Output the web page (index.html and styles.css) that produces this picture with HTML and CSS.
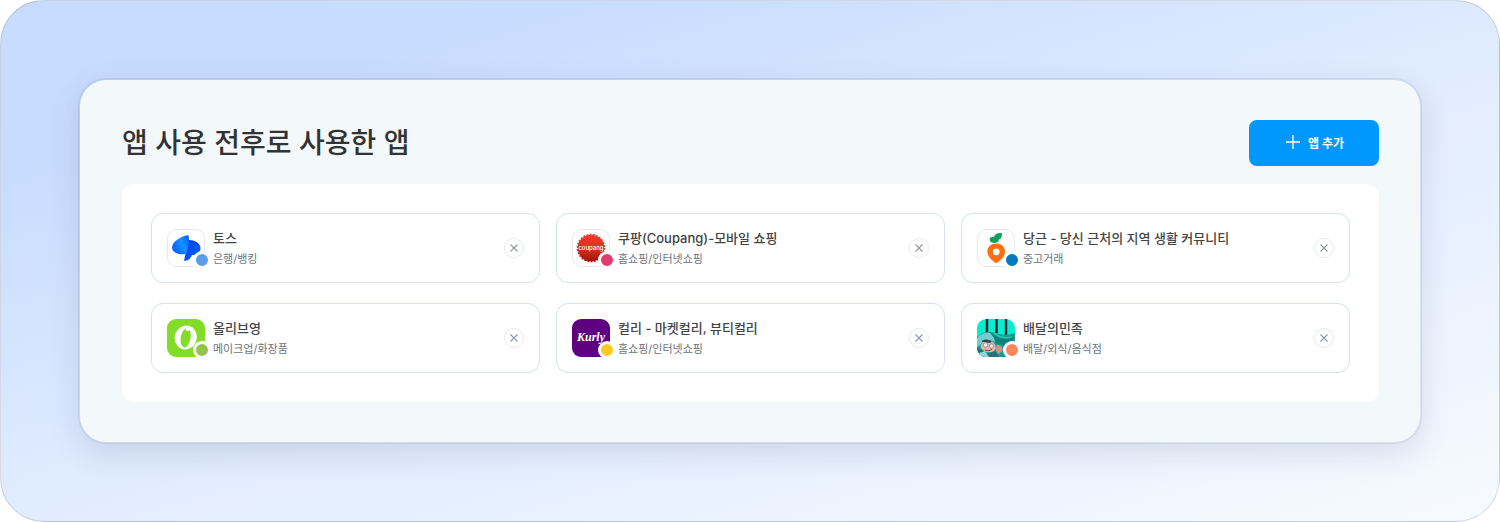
FILE: index.html
```html
<!DOCTYPE html>
<html lang="ko">
<head>
  <meta charset="UTF-8">
  <meta name="viewport" content="width=device-width, initial-scale=1.0">
  <title>앱 사용 전후로 사용한 앱</title>
  <link rel="stylesheet" href="styles.css">
</head>
<body>
  <main class="stage">
    <section class="panel">
      <header class="panel-header">
        <h1>앱 사용 전후로 사용한 앱</h1>
        <button type="button" class="add-btn">
          <svg width="14" height="14" viewBox="0 0 14 14" aria-hidden="true"><path d="M7 0v14M0 7h14" stroke="currentColor" stroke-width="1.3"/></svg>
          앱 추가
        </button>
      </header>

      <ul class="app-list">
        <li class="app-card">
          <div class="app-icon">
            <svg viewBox="0 0 38 38" aria-hidden="true">
              <defs>
                <linearGradient id="toss-a" x1="0" y1=".7" x2="1" y2=".2"><stop offset="0" stop-color="#0a5cff"/><stop offset=".6" stop-color="#1592ff"/><stop offset="1" stop-color="#0064ff"/></linearGradient>
                <linearGradient id="toss-b" x1="0" y1="0" x2="1" y2="1"><stop offset="0" stop-color="#0038e8"/><stop offset="1" stop-color="#0a6cff"/></linearGradient>
              </defs>
              <rect x=".5" y=".5" width="37" height="37" rx="9" fill="#fff" stroke="#e6e8ea"/>
              <path d="M21 11c7-.6 12.500 3.400 12.500 8.200 0 4-3.500 6.800-8.500 6.800-1.500 4-4.500 6.500-8 5.600 1.500-5.600 3-14 4-20.600z" fill="url(#toss-b)"/>
              <path d="M21.500 6.200c1.200 5.500.2 12.500-2.500 18.800-5 .8-9-.1-11.500-2C4.200 20.300 4.300 16 8 12.500c3.500-3.500 8.500-6 13.500-6.300z" fill="url(#toss-a)"/>
            </svg>
            <span class="dot dot-bank"></span>
          </div>
          <div class="app-text">
            <h2>토스</h2>
            <p>은행/뱅킹</p>
          </div>
          <button type="button" class="remove-btn" aria-label="토스 삭제"><svg width="8" height="8" viewBox="0 0 8 8"><path d="M.5.5l7 7M7.500.5l-7 7"/></svg></button>
        </li>

        <li class="app-card">
          <div class="app-icon">
            <svg viewBox="0 0 38 38" aria-hidden="true">
              <defs>
                <linearGradient id="coupang" x1="0" y1="0" x2="0" y2="1"><stop offset="0" stop-color="#f23b2b"/><stop offset=".55" stop-color="#dc2c1e"/><stop offset="1" stop-color="#a31208"/></linearGradient>
              </defs>
              <rect x=".5" y=".5" width="37" height="37" rx="9" fill="#fff" stroke="#e6e8ea"/>
              <circle cx="19" cy="19" r="13.300" fill="url(#coupang)"/>
              <circle cx="19" cy="19" r="13.500" fill="none" stroke="url(#coupang)" stroke-width="1.600" stroke-dasharray="1.800 1.457"/>
              <text x="19" y="21" text-anchor="middle" class="coupang-mark">coupang</text>
            </svg>
            <span class="dot dot-pink"></span>
          </div>
          <div class="app-text">
            <h2>쿠팡(Coupang)-모바일 쇼핑</h2>
            <p>홈쇼핑/인터넷쇼핑</p>
          </div>
          <button type="button" class="remove-btn" aria-label="쿠팡 삭제"><svg width="8" height="8" viewBox="0 0 8 8"><path d="M.5.5l7 7M7.500.5l-7 7"/></svg></button>
        </li>

        <li class="app-card">
          <div class="app-icon">
            <svg viewBox="0 0 38 38" aria-hidden="true">
              <rect x=".5" y=".5" width="37" height="37" rx="9" fill="#fff" stroke="#e6e8ea"/>
              <path d="M19 13.800c-2 .4-6 .2-6.300-2.800-.2-2.500 2-3.600 4.300-3.200C17.600 4.800 21 3.600 24.800 4c.5 3.300-.4 5.700-2.800 6.600-.3 1.700-1.300 2.800-3 3.200z" fill="#09a35c"/>
              <path fill-rule="evenodd" d="M19.200 14.600c5.200 0 8.800 3.400 8.800 8 0 5.200-4.400 8.700-8.800 11.600-4.400-2.900-8.800-6.400-8.800-11.600 0-4.600 3.600-8 8.800-8zm0 4.800a3.400 3.400 0 1 0 0 6.800 3.400 3.400 0 0 0 0-6.800z" fill="#ff6f0f"/>
            </svg>
            <span class="dot dot-blue"></span>
          </div>
          <div class="app-text">
            <h2>당근 - 당신 근처의 지역 생활 커뮤니티</h2>
            <p>중고거래</p>
          </div>
          <button type="button" class="remove-btn" aria-label="당근 삭제"><svg width="8" height="8" viewBox="0 0 8 8"><path d="M.5.5l7 7M7.500.5l-7 7"/></svg></button>
        </li>

        <li class="app-card">
          <div class="app-icon">
            <svg viewBox="0 0 38 38" aria-hidden="true">
              <rect width="38" height="38" rx="9" fill="#82dc28"/>
              <ellipse cx="18.700" cy="18.500" rx="11" ry="12" transform="rotate(14 18.700 18.500)" fill="#fff"/>
              <ellipse cx="18.700" cy="18.800" rx="4.900" ry="9.800" transform="rotate(10 18.700 18.800)" fill="#82dc28"/>
              <path d="M21.500 7.500c-2.500.3-3.600 2.300-2.600 3.800 1 1.300 3 .8 4.100-.3z" fill="#fff"/>
            </svg>
            <span class="dot dot-green"></span>
          </div>
          <div class="app-text">
            <h2>올리브영</h2>
            <p>메이크업/화장품</p>
          </div>
          <button type="button" class="remove-btn" aria-label="올리브영 삭제"><svg width="8" height="8" viewBox="0 0 8 8"><path d="M.5.5l7 7M7.500.5l-7 7"/></svg></button>
        </li>

        <li class="app-card">
          <div class="app-icon">
            <svg viewBox="0 0 38 38" aria-hidden="true">
              <rect width="38" height="38" rx="9" fill="#5f0080"/>
              <text x="19" y="22" text-anchor="middle" class="kurly-mark">Kurly</text>
            </svg>
            <span class="dot dot-yellow"></span>
          </div>
          <div class="app-text">
            <h2>컬리 - 마켓컬리, 뷰티컬리</h2>
            <p>홈쇼핑/인터넷쇼핑</p>
          </div>
          <button type="button" class="remove-btn" aria-label="컬리 삭제"><svg width="8" height="8" viewBox="0 0 8 8"><path d="M.5.5l7 7M7.500.5l-7 7"/></svg></button>
        </li>

        <li class="app-card">
          <div class="app-icon">
            <svg viewBox="0 0 38 38" aria-hidden="true">
              <defs><clipPath id="baemin"><rect width="38" height="38" rx="9"/></clipPath></defs>
              <g clip-path="url(#baemin)">
                <rect width="38" height="38" fill="#08edcf"/>
                <path d="M10 0v13M19.500 0v14M29 0v16" stroke="#0b2529" stroke-width="2.400"/>
                <path d="M0 18c4-4 9-6 14-5 7 1 13 5 24 1v24H0z" fill="#159d92"/>
                <path d="M13 13c6 6 14 9 24 5-2 6-7 9-13 8-6-1-10-6-11-13z" fill="#0e8279"/>
                <path d="M17 14c5 4 11 6 18 4" fill="none" stroke="#2fc9b8" stroke-width="1.200"/>
                <path d="M0 19c3-4 8-6 13-5 3 3 5 6 5 9-5-3-11-3-15 3l-3 2z" fill="#73ccd0"/>
                <path d="M4 26c1-4 6-6 10-4 4 2 6 6 4 9-3 3-9 3-12 0-2-2-3-3-2-5z" fill="#e3b9ad"/>
                <path d="M5 22c3-2 7-2 10 1l-3 1c-2-1-4-1-7-1z" fill="#284b51"/>
                <circle cx="8.500" cy="26" r="2.300" fill="#eee" stroke="#6b6b70" stroke-width=".6"/>
                <circle cx="14.500" cy="27" r="2.100" fill="#eee" stroke="#6b6b70" stroke-width=".6"/>
                <path d="M8 31c3 1 5 1 7-1" fill="none" stroke="#763a3a"/>
                <path d="M0 29l5 2 5 4 8-3 4 6H0z" fill="#286f78"/>
                <path d="M2 34l6-2 4 6H4z" fill="#8fd7d9"/>
                <path d="M20 26c4 0 5 2 6 5l-4 4c-3-2-4-5-2-9z" fill="#c99489"/>
              </g>
            </svg>
            <span class="dot dot-orange"></span>
          </div>
          <div class="app-text">
            <h2>배달의민족</h2>
            <p>배달/외식/음식점</p>
          </div>
          <button type="button" class="remove-btn" aria-label="배달의민족 삭제"><svg width="8" height="8" viewBox="0 0 8 8"><path d="M.5.5l7 7M7.500.5l-7 7"/></svg></button>
        </li>
      </ul>
    </section>
  </main>
</body>
</html>
```

FILE: styles.css
```css
* {
  box-sizing: border-box;
}
body {
  margin: 0;
  background: #fff;
  color: #333;
  font-family: Inter, "Noto Sans CJK KR", sans-serif;
}
h1, h2, p, ul {
  margin: 0;
  padding: 0;
}
button {
  font-family: inherit;
  cursor: pointer;
}
.stage {
  min-height: 100vh;
  padding: 77px;
  border: 1px solid rgba(60, 70, 90, 0.16);
  border-radius: 44px;
  background: linear-gradient(163deg, #c8dcff 18%, #dfebff 50%, #f7faff 100%);
}
.panel {
  padding: 40px 41px 40px 42px;
  border: 2px solid rgba(80, 95, 130, 0.12);
  border-radius: 28px;
  background: #f3f8fb;
  background-clip: padding-box;
  box-shadow: 0 10px 30px rgba(60, 70, 100, 0.14);
}
.panel-header {
  display: flex;
  justify-content: space-between;
  align-items: center;
  margin-bottom: 18px;
}
h1 {
  font-size: 28px;
  font-weight: 500;
  line-height: 40px;
}
.add-btn {
  display: flex;
  align-items: center;
  justify-content: center;
  gap: 8px;
  width: 130px;
  height: 46px;
  padding: 0 0 2px 2px;
  border: none;
  border-radius: 8px;
  background: #0098ff;
  color: #fff;
  font-size: 12px;
  font-weight: 700;
}
.app-list {
  display: grid;
  grid-template-columns: repeat(3, 1fr);
  gap: 20px 16px;
  padding: 29px;
  border-radius: 12px;
  background: #fff;
  list-style: none;
}
.app-card {
  display: flex;
  align-items: center;
  gap: 8px;
  height: 70px;
  padding: 0 15px;
  border: 1px solid #d5e1ee;
  border-radius: 12px;
}
.app-icon {
  position: relative;
  width: 38px;
  height: 38px;
}
.app-icon svg {
  display: block;
}
.dot {
  position: absolute;
  right: -6px;
  bottom: -2px;
  width: 18px;
  height: 18px;
  border: 3px solid #fff;
  border-radius: 50%;
}
.dot-bank { background-color: #5b9de9; }
.dot-pink { background-color: #e33b70; }
.dot-blue { background-color: #007bbd; }
.dot-green { background-color: #94c447; }
.dot-yellow { background-color: #ffca1c; }
.dot-orange { background-color: #ff855c; }
.coupang-mark {
  fill: #fff;
  font-size: 6px;
  font-weight: 500;
}
.kurly-mark {
  fill: #fff;
  font-family: "Liberation Serif", serif;
  font-size: 12px;
  font-style: italic;
  font-weight: 700;
}
.app-text {
  flex: 1;
  min-width: 0;
  padding-top: 2px;
}
.app-text h2 {
  color: #444;
  font-size: 13px;
  font-weight: 500;
  line-height: 21px;
}
.app-text p {
  color: #6b7280;
  font-size: 11px;
  line-height: 21px;
}
.remove-btn {
  display: flex;
  align-items: center;
  justify-content: center;
  width: 20px;
  height: 20px;
  padding: 0;
  border: 1px solid #e8ebee;
  border-radius: 50%;
  background: #fff;
}
.remove-btn svg {
  fill: none;
  stroke: #8d98a8;
  stroke-width: 1.1;
}
```
